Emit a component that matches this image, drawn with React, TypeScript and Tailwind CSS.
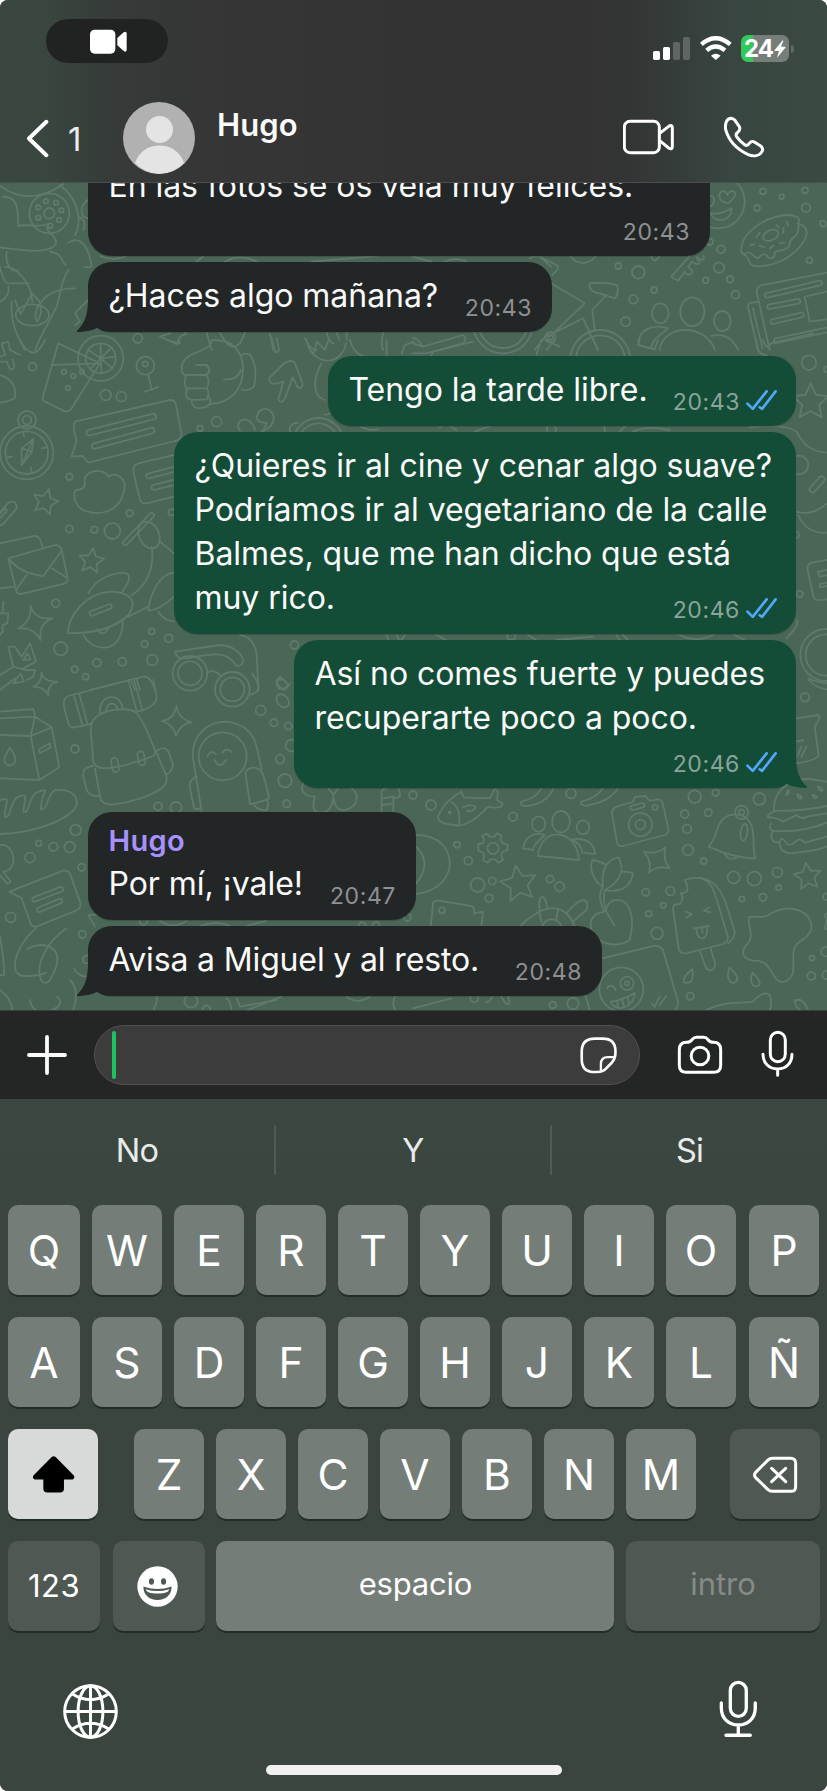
import React from "react";

/* ---------- Wallpaper ---------- */

type Bar = [number, number, number, number, number];
type Tile = {
  x: number;
  y: number;
  paths: string[];
  dots: [number, number, number][];
  ovals?: [number, number, number, number, number][];
  bars?: Bar[];
  stars?: [number, number, number, number][];
};

const tiles: Tile[] = [
  {
    x: 0,
    y: 0,
    paths: [
      "M0 558 Q90 622 190 552",
      "M10 590 C60 590 52 640 55 678 C80 670 110 685 145 672 C130 700 170 700 168 730 C150 765 60 750 0 742",
      "M180 555 C240 600 245 670 225 705 M235 650 Q262 660 250 690 M262 600 Q235 625 250 650 L264 655",
      "M20 755 C15 790 30 815 55 812 M150 755 C190 760 185 790 197 795 M205 728 C250 700 270 760 275 800 L255 802",
      "M0 800 Q10 850 25 850 L85 850 M15 800 C50 800 95 850 97 905 M205 810 C180 850 185 870 170 920 C140 980 120 1010 105 1050 M35 905 C30 980 60 1020 75 1050 M225 865 C160 865 130 890 115 920 M0 905 Q30 890 25 860",
      "M45 900 L62 942 L97 880 L118 905 Q130 940 112 965 Q100 950 115 915",
      "M300 768 Q340 785 380 768 M590 785 L610 768 M675 785 Q720 760 770 785 M935 785 L1130 768",
      "M480 1010 L510 1000 L520 985 M480 1010 L505 1020 L530 1033 L540 1010 L560 1000 L545 990",
      "M620 998 L635 1050 M660 998 Q690 1060 720 1030 L735 998 M810 1000 L820 1050",
      "M980 998 Q990 1030 1000 1030 M1010 998 L1018 1020 M1040 998 L1040 1020 M915 1015 Q930 1050 950 1050 M1150 998 Q1140 1030 1150 1050",
      "M264 900 L225 940 L240 965 L225 975",
    ],
    dots: [[148, 640, 60], [148, 640, 16], [138, 604, 7], [168, 608, 7], [184, 631, 7], [177, 660, 7], [151, 677, 7], [115, 653, 7], [115, 622, 7], [413, 1015, 14]],
    ovals: [[97, 945, 50, 32, 0]],
  },
  {
    x: 413,
    y: 0,
    paths: [
      "M920 592 C915 570 940 568 943 585 C955 565 975 575 963 590 C955 605 945 612 940 608 C930 606 922 602 920 592 M892 620 Q910 605 900 590 L892 588",
      "M893 640 Q925 645 955 625 C958 665 905 672 893 640z",
      "M985 740 C995 690 1060 650 1120 645 C1150 645 1165 655 1155 670 C1185 680 1190 700 1165 735 C1130 780 1070 805 1020 797 C1000 785 1010 770 995 765 C980 760 985 745 985 740z",
      "M995 765 C1010 745 1020 770 1028 772 C1045 780 1040 755 1060 765 C1065 780 1085 775 1085 765 C1080 745 1120 760 1130 735 C1125 710 1165 715 1155 670",
      "M1030 712 l10 -14 M1012 735 l12 -2 M1040 738 l14 3 M1070 745 l12 -8 M1100 730 l14 -2 M1110 700 l2 -16 M1090 675 l8 8 M1120 665 l6 12",
      "M830 768 L775 830 L795 842 L815 815 C820 828 838 826 838 812 L825 800 L838 785 Q855 800 860 785 L850 770 Q875 790 872 768 M715 770 Q720 785 730 780 L740 768",
      "M1242 818 L1050 855 Q1028 860 1032 880 L1070 1050 M1032 906 L1015 908 Q1003 910 1006 925 L1035 1050 M1020 925 L1048 1045",
      "M1242 875 L1175 890 L1190 965 L1242 958",
      "M740 1050 C750 970 880 970 905 1050 M675 1035 C675 990 720 970 765 985 L735 1010 Q720 1020 715 1045z M895 1008 Q950 995 975 1050",
      "M415 850 L515 910 L410 1010 M430 995 L510 955 L555 1050 M545 990 L538 930 L580 885 M530 850 Q525 875 560 880 L605 895 Q620 880 612 855 Q570 845 530 850z",
      "M350 775 Q370 765 380 770 L430 795 Q440 800 430 812 L418 825 M380 770 L415 800 M470 768 Q510 810 550 768 M95 785 Q130 770 160 785 M0 770 L55 785",
      "M0 1030 L30 1040 L150 1005 M30 1040 Q10 1010 0 1015 M0 1060 L40 1060 L150 1030 Q165 1015 150 1005",
      "M365 1050 L405 1000 M400 1050 L425 1020",
    ],
    dots: [[915, 605, 80], [1050, 574, 9], [1106, 590, 7], [1176, 571, 9], [1032, 624, 9], [1179, 623, 13], [1230, 671, 9], [1189, 781, 9], [924, 748, 12], [890, 725, 10], [918, 803, 16], [878, 841, 9], [951, 838, 10], [967, 884, 12], [616, 798, 9], [676, 817, 19], [723, 870, 9], [661, 898, 13], [638, 965, 14], [270, 970, 90], [270, 970, 74], [562, 1080, 90], [562, 1080, 74], [412, 1012, 8], [412, 1012, 16]],
    ovals: [[1073, 706, 24, 15, -25], [838, 935, 36, 43, 0], [742, 940, 25, 30, 0], [928, 963, 25, 30, 0]],
    bars: [[1062, 886, 1220, 849, 14], [1070, 920, 1155, 904, 14], [1080, 965, 1165, 945, 14], [1090, 1022, 1242, 990, 14]],
  },
  {
    x: 0,
    y: 340,
    paths: [
      "M175 10 L300 70 L215 205 Q205 220 190 212 L135 185 Q125 180 130 165z M155 75 L300 70",
      "M302 55 L302 12 M302 55 L335 22 M302 55 L346 50 M302 55 L338 85 M302 55 L305 98 M302 55 L270 88 M302 55 L265 30",
      "M445 105 L455 150 M432 156 L475 141",
      "M635 0 C635 40 545 30 545 85 Q545 105 558 105 Q548 140 562 145 Q550 175 575 180 Q575 210 610 203 Q640 195 628 172 M588 75 L620 75 Q635 90 620 105 L558 105 M562 145 L620 145 Q632 125 620 105 M575 180 L620 178 Q630 160 620 145 M640 0 C700 0 720 30 728 70 C735 150 690 190 630 192 M672 118 Q715 120 722 90 M722 45 Q745 38 750 45 Q775 80 762 140 Q745 155 725 148",
      "M850 72 Q875 55 885 70 L908 130 Q908 150 892 140 L878 112 L855 175 Q845 195 835 178 L850 125 L822 132 Q800 125 810 112z",
      "M815 -5 L825 35 Q835 40 837 30 L830 -5",
      "M65 325 L100 297 L96 335 L65 375z M100 297 L65 375 M65 325 L96 335 M69 275 l3 14 M125 325 l14 -3 M92 382 l3 14 M22 352 l14 -3",
      "M225 245 L510 180 Q525 180 528 195 L545 285 Q540 300 525 303 L265 368 L248 348 L215 350 L230 300 Q215 260 225 245z",
      "M522 345 L415 370 Q398 375 400 395 L420 480 Q425 492 440 490 L522 470",
      "M255 430 C245 390 310 380 325 410 C350 390 385 420 370 460 C355 520 290 525 265 515 C225 510 215 460 228 450 Q255 450 255 430z",
      "M25 655 L165 615 Q180 615 185 630 L203 715 Q203 730 190 732 L65 762 Q50 762 48 750z M25 655 Q60 700 130 708 L185 632 M48 750 L80 705 M203 715 L155 685 M0 610 L105 587 Q122 590 128 622 M0 745 L40 740",
      "M92 797 Q102 840 157 835 Q115 850 122 900 Q100 860 55 865 Q95 845 92 797z",
      "M125 997 Q130 1025 172 1025 Q140 1035 145 1065 Q130 1040 100 1040 Q125 1030 125 997z",
      "M205 880 C200 830 260 755 340 755 C400 760 410 790 385 825 C340 870 260 880 205 880z M265 760 C290 710 350 695 380 700 Q400 710 365 758 M250 885 C270 920 300 925 320 922 C350 920 370 880 368 845 M290 868 Q310 895 328 860 M395 765 C440 740 465 680 455 620 M385 830 L445 800",
      "M445 812 C450 760 480 700 522 698 M445 812 Q480 810 522 770 M480 605 L522 640 M475 815 Q490 840 522 845",
      "M0 105 Q50 120 45 170 Q45 180 0 188 M60 0 Q80 40 105 38 Q120 30 135 0",
      "M5 10 L25 5 L30 30 L60 45 M5 10 L15 45 L0 50 M0 65 L20 65 L30 88 Q45 90 42 75 L38 58",
      "M25 920 L45 920 L65 950 L90 910 L108 965 L70 985 M25 920 L40 980 L0 1005 M40 980 L75 990 L105 990 L100 1010 L80 1020 M0 1050 L45 1015 M0 820 L25 820 L22 850 L8 855 L8 875 L0 885 M10 785 L8 815 M70 960 L82 940 L92 958z M40 1030 L62 1000 L72 1025z",
      "M525 935 L660 915 C700 915 730 945 730 965 Q715 990 700 965 C670 930 620 945 560 955 Q530 960 525 935z M720 885 Q760 890 770 940 L775 1050 M620 1000 Q640 985 660 1005",
      "M270 1050 L430 1010 Q450 1005 465 1050 M395 1025 L405 1050 M410 1018 L420 1050",
      "M920 0 C930 70 1020 90 1038 10 M965 70 C940 110 935 170 975 180 M940 45 L950 5 L975 30 L985 0 M1050 0 Q1060 40 1090 48 M1160 0 L1160 45 M1205 40 L1215 15 L1242 5",
      "M770 232 Q775 205 800 207 C830 215 830 260 785 275 Q800 255 800 248 Q772 250 770 232z M765 270 C760 245 735 230 718 245 Q710 260 720 272 M870 275 Q865 250 895 248 M975 225 L1015 212 M1085 262 L1110 270 L1135 268",
      "M1160 885 L1170 915 M1190 885 L1200 905 L1215 885",
      "M840 1010 Q820 1030 850 1050 Q880 1040 840 1010z M500 0 L540 10 L535 0",
    ],
    dots: [[302, 55, 68], [302, 55, 45], [98, 80, 12], [436, 77, 27], [436, 72, 8], [192, 95, 7], [220, 108, 7], [246, 95, 7], [204, 144, 7], [317, 165, 16], [364, 170, 15], [650, 245, 15], [600, 265, 9], [208, 410, 10], [389, 520, 10], [208, 567, 11], [283, 569, 10], [337, 573, 24], [167, 790, 12], [455, 874, 9], [506, 895, 12], [434, 912, 10], [457, 960, 16], [367, 965, 12], [291, 968, 12], [224, 988, 10], [257, 1010, 9], [182, 926, 20], [883, 915, 12], [80, 338, 80], [80, 338, 64], [81, 240, 27], [81, 240, 13], [955, 310, 76], [955, 310, 60], [515, 517, 10], [570, 1000, 52], [570, 1000, 36], [697, 1048, 52], [697, 1048, 36]],
    ovals: [[447, 585, 30, 42, -25]],
    bars: [[268, 278, 460, 230, 17], [284, 318, 455, 272, 17], [446, 408, 522, 388, 15], [462, 442, 522, 427, 15], [0, 540, 35, 500, 30], [0, 528, 15, 512, 10], [276, 820, 328, 800, 14], [376, 608, 455, 526, 14]],
    stars: [[136, 486, 40, 15], [274, 663, 39, 8]],
  },
  {
    x: 413,
    y: 340,
    paths: [
      "M1149 515 Q1195 530 1242 490 M1155 525 C1175 570 1210 580 1242 578",
      "M1010 262 Q1120 250 1150 275 C1170 310 1190 335 1242 338",
      "M1242 660 L1195 668 Q1180 675 1184 690 L1202 772 Q1205 785 1242 778 M1242 690 L1215 695 L1218 710 L1242 706 M1242 728 L1220 732 L1222 742 L1242 738",
      "M55 45 L60 35 L180 5 M370 45 L385 0 M400 0 L440 20 M680 0 L675 15 L725 28 L735 0 M1030 0 Q1030 45 1060 45 M1050 0 Q1055 20 1065 20 L1075 10 L1200 -20",
      "M80 262 L100 250 L130 270 M185 275 L240 255 M620 275 L640 255 M660 275 Q700 255 770 270 M575 258 L575 275",
      "M70 885 L100 900 M345 885 L370 900 M430 900 L540 890 M610 885 L620 900 M630 885 L645 900 M800 885 Q850 910 900 885 M965 885 L995 900",
      "M1149 840 Q1165 850 1120 895",
    ],
    dots: [[1188, 68, 22], [1242, 88, 9], [1158, 375, 28], [1160, 762, 10], [1240, 945, 78], [1240, 945, 62], [295, 888, 12], [415, 268, 14], [1148, 585, 10]],
    bars: [[1226, 418, 1199, 448, 18]],
    stars: [[1193, 186, 56, 0]],
  },
  {
    x: 0,
    y: 680,
    paths: [
      "M390 0 L205 48 Q188 55 192 80 L205 130 Q210 145 225 142 L272 132 M222 48 L248 138 M238 42 L262 130 M385 0 L410 92 M402 0 L428 92 M412 95 Q470 80 470 50 L460 0",
      "M272 150 C270 105 320 90 360 88 C410 85 415 100 440 150 L465 210 Q470 225 455 230 C400 250 350 265 315 265 Q285 265 280 245z M285 265 L300 350 Q305 375 335 374 C390 368 450 350 485 325 Q505 310 498 285 L468 215 M278 258 Q245 262 250 290 L260 330 Q270 350 297 348 M470 212 Q495 195 505 215 L518 250 Q522 270 500 283 M300 100 C295 40 365 35 368 88 M318 92 Q322 70 335 70 Q350 72 352 88",
      "M530 78 Q535 118 575 126 Q540 132 528 168 Q522 135 486 123 Q522 118 530 78z",
      "M605 395 L580 240 C570 170 620 125 675 125 C730 128 760 160 770 200 L785 268 M622 228 Q635 208 648 222 M667 218 Q680 200 694 216 M643 240 Q660 270 678 240",
      "M737 285 Q735 265 760 263 Q780 262 790 285 L807 350 Q806 360 790 362 Q770 370 750 372z M762 375 Q775 392 800 390 Q808 375 802 362 M590 290 Q565 300 570 325 L582 385 Q590 390 600 385",
      "M0 95 L100 87 L105 110 L92 168 L0 165 M0 115 L105 110 L155 142 L92 168 L118 300 L0 295 M155 142 L178 262 L118 300 M30 203 C15 225 8 240 18 252 Q30 262 42 250 C52 240 42 220 30 203z M118 208 L150 190 L152 202 L120 220z",
      "M0 362 C10 355 25 355 20 368 Q15 390 14 410 Q22 415 28 400 Q35 370 50 352 Q75 340 76 352 Q72 375 70 395 Q78 400 84 385 Q95 350 105 340 Q140 325 135 335 Q125 355 122 388 Q132 392 140 372 Q150 340 165 330 C225 325 240 360 225 385 C190 430 80 460 0 462",
      "M28 635 L190 572 Q205 570 210 582 L242 670 Q242 685 232 690 L110 740 Q97 742 92 732 L65 655z",
      "M0 495 C30 490 50 530 35 560 Q25 575 10 575 L32 605 L22 612 L0 585",
      "M200 745 C140 785 110 850 120 890 C125 915 145 915 155 890 C185 840 175 800 130 795 Q100 795 82 808 M110 742 C70 775 40 830 45 865 Q50 890 80 888 Q120 888 140 878",
      "M0 930 Q30 950 38 990 M0 770 Q14 850 12 885 L0 885 M210 900 Q240 930 220 990 M90 960 Q95 1000 140 995 Q185 985 180 960 L172 950 M312 703 L265 705 L285 740 M222 865 Q230 885 258 890",
      "M470 950 Q475 960 460 990 M680 955 Q690 960 695 990 M710 955 L720 980 L830 960 M730 995 L845 950 M1185 950 Q1175 970 1185 990 M1040 950 Q1070 975 1110 950",
      "M915 300 C895 330 910 350 945 350 Q930 395 960 398 C990 400 1000 370 1000 350 Q1005 395 1035 390 C1075 380 1080 345 1055 325 M985 325 L1000 345 L1015 325",
      "M1145 395 L1145 340 Q1145 325 1160 325 M1195 325 Q1202 340 1200 350 L1180 355 L1180 395 M1147 355 L1180 350 M1147 375 L1180 370",
      "M480 722 Q520 750 560 722 M600 738 Q650 720 690 738 M740 738 L800 722 M1075 738 Q1085 715 1100 738 M1115 738 Q1130 710 1140 738",
      "M755 -20 Q780 10 775 30 Q760 45 745 45 M845 0 Q820 -10 835 25 Q860 30 870 10",
    ],
    dots: [[225, 207, 12], [474, 379, 12], [528, 383, 17], [782, 91, 15], [822, 128, 11], [865, 138, 11], [875, 197, 18], [840, 237, 13], [855, 302, 20], [860, 371, 11], [227, 450, 16], [116, 490, 9], [160, 500, 13], [209, 501, 16], [90, 533, 15], [245, 562, 11], [32, 712, 15], [247, 763, 11], [260, 838, 12], [668, 229, 72], [573, 963, 20], [620, 987, 11], [1222, 712, 11], [430, 724, 11]],
    ovals: [[848, 62, 16, 22, -40]],
    bars: [[343, 244, 347, 266, 20], [422, 224, 426, 246, 20], [104, 658, 182, 628, 14], [118, 689, 180, 663, 14]],
  },
  {
    x: 413,
    y: 680,
    paths: [
      "M75 410 C90 370 120 350 145 335 L152 352 L230 355 L245 328 Q258 325 252 360 L270 372 Q265 388 225 380 C190 420 150 440 130 436 C90 432 75 425 75 410z M115 365 Q145 385 138 435 M150 383 Q165 370 188 380 Q180 400 162 392",
      "M375 528 C380 440 490 440 498 540z M330 505 C335 470 365 455 395 465 L375 485 Q362 495 360 510z M475 478 Q540 470 547 522 L508 518 Q505 490 475 478z",
      "M597 400 Q597 385 610 380 L660 366 Q662 352 672 350 L698 348 Q705 360 712 362 L735 358 Q745 358 749 370 L766 445 Q768 460 755 465 L630 498 Q615 500 612 488z",
      "M887 500 C910 475 905 460 920 430 C940 395 990 395 1010 425 C1030 455 1015 500 1027 535 C975 535 930 520 887 500z M935 520 Q945 545 972 532",
      "M1083 392 C1080 340 1120 295 1190 297 L1242 305 M1083 392 Q1160 395 1242 378 M1083 395 C1060 405 1060 415 1075 412 Q1100 415 1110 425 Q1130 415 1150 405 Q1165 420 1180 410 L1242 400 M1075 430 Q1065 445 1078 452 Q1160 460 1242 428 M1078 452 C1070 480 1080 488 1100 487 Q1105 465 1120 490 Q1130 500 1145 487 Q1160 470 1175 488 L1242 470 M1100 487 Q1098 515 1130 520 Q1200 515 1242 500",
      "M1120 345 q2 -14 8 -14 q4 10 -8 14 M1153 343 q10 2 14 12 q-12 4 -14 -12 M1198 345 q10 -2 14 6 q-10 8 -14 -6 M1215 320 q10 0 14 12 q-12 2 -14 -12",
      "M693 515 Q730 525 757 502 Q748 540 770 565 Q730 555 708 578 Q718 545 693 515z",
      "M575 695 Q550 650 570 620 C535 600 530 560 538 540 Q565 545 580 555 Q595 535 617 532 Q628 555 625 575 Q650 575 660 580 C655 620 620 640 575 630 M570 620 Q565 580 580 555 M575 630 Q615 610 625 575 M575 630 Q568 660 580 695 Q600 730 605 737 M575 695 C535 700 520 730 545 765 C570 800 620 800 650 780 C665 720 655 680 630 663 Q590 650 578 690",
      "M815 600 C860 585 890 595 905 640 L945 770 Q945 785 930 792 L820 820 Q800 822 797 805 L780 685 Q780 672 800 672 Q815 655 803 640 Q830 640 822 615z M860 593 C910 600 930 640 945 690 L965 755 Q965 775 945 790 M862 815 L877 860 Q885 875 900 868 Q910 860 905 845 L893 805 M818 695 L837 703 L820 713 M890 682 L872 692 L892 697 M843 745 L887 738 M850 745 Q850 775 868 775 Q885 772 882 740 M866 742 L869 758",
      "M1008 712 C1030 705 1050 720 1075 700 C1110 680 1160 680 1185 710 C1205 740 1195 765 1160 785 C1130 805 1145 840 1140 880 C1125 910 1100 915 1085 890 C1065 860 1060 840 1020 842 C985 835 985 815 1000 795 C1030 770 1000 730 1008 712z",
      "M838 868 C815 885 808 900 815 908 Q845 915 838 868z M950 862 C940 885 945 905 960 910 Q990 900 950 862z M1018 878 C1010 900 1015 918 1030 920 Q1055 912 1018 878z",
      "M53 740 L60 670 Q62 660 75 662 L175 678 Q185 680 183 700 L210 695 L205 740",
      "M320 740 Q380 680 430 685 Q470 695 485 740 M385 745 Q395 715 420 718 Q440 722 445 740 M378 692 L385 725 M435 688 L430 720 M380 690 Q375 655 388 650 Q400 655 402 685 M460 700 Q490 665 510 660 Q530 665 520 690 L480 725",
      "M568 835 L725 797 Q742 797 750 810 L795 965 Q795 985 785 990 M518 948 L530 990 M582 925 Q595 905 608 930 M593 965 Q630 960 665 938 C665 985 605 1000 593 965z M612 962 L615 985 M628 958 L633 980 M645 952 L648 972 M715 970 L725 980 L740 950 M740 975 L760 948",
      "M880 990 C940 960 1000 970 1020 965 Q1050 930 1070 945 Q1080 970 1070 990 M1145 962 Q1170 950 1185 990 M1145 962 Q1148 980 1160 990",
      "M9 465 C80 465 115 510 110 560 C100 610 60 635 9 642 M9 500 Q60 550 9 610",
      "M325 365 Q370 355 385 325 M325 365 Q320 380 345 378 Q400 370 422 325 M505 365 Q550 355 570 325 M505 365 Q500 380 525 376 Q590 365 615 325",
      "M1149 115 L1215 105 Q1225 110 1205 140 L1217 225 Q1215 240 1149 250 M1150 185 L1172 180 M1155 225 L1165 200 M1165 230 L1180 200",
      "M1187 0 Q1210 25 1242 28 M1187 -5 Q1210 8 1242 10 M0 985 L115 955 M220 965 Q230 970 240 945 M265 950 Q280 980 290 970 L285 948",
      "M1242 700 L1235 705 L1242 720 L1235 745 L1242 748",
      "M196 492 L210 489 L213 478 L207 468 L222 460 L230 470 L244 470 L252 460 L266 466 L262 480 L270 490 L284 494 L284 510 L270 514 L264 526 L270 540 L256 548 L246 538 L232 538 L224 548 L210 540 L214 528 L210 518 L196 512z",
    ],
    dots: [[54, 375, 15], [300, 410, 13], [474, 340, 15], [132, 494, 9], [166, 542, 12], [194, 615, 21], [238, 603, 11], [228, 655, 12], [411, 597, 11], [440, 620, 14], [698, 637, 11], [772, 633, 13], [751, 676, 8], [707, 701, 9], [732, 760, 18], [845, 350, 19], [908, 338, 10], [1039, 357, 18], [815, 402, 12], [886, 398, 11], [822, 447, 13], [825, 510, 16], [872, 543, 9], [962, 592, 18], [1024, 596, 21], [1093, 577, 15], [1097, 623, 8], [1050, 652, 11], [987, 657, 8], [1197, 834, 8], [1195, 888, 12], [832, 949, 11], [480, 971, 17], [419, 975, 10], [1176, 52, 13], [0, 345, 12], [240, 505, 17], [682, 434, 35], [682, 434, 15], [726, 382, 8], [986, 397, 20], [986, 397, 8], [87, 691, 9], [625, 928, 66], [642, 910, 20], [642, 910, 6], [110, 397, 3], [1240, 650, 10], [1238, 815, 14], [1240, 885, 12], [184, 955, 12]],
    ovals: [[444, 425, 27, 32, 0], [377, 432, 20, 23, 0], [510, 442, 19, 21, 0], [993, 457, 10, 26, 8]],
    bars: [[658, 384, 688, 376, 13]],
    stars: [[317, 612, 56, -10], [1184, 590, 42, -8]],
  },
];

function starPath(cx: number, cy: number, r: number, deg: number) {
  let d = "";
  for (let i = 0; i < 10; i++) {
    const a = ((i * 36 - 90 + deg) * Math.PI) / 180;
    const q = i % 2 ? r * 0.48 : r;
    d += `${i ? "L" : "M"}${(cx + q * Math.cos(a)).toFixed(1)} ${(cy + q * Math.sin(a)).toFixed(1)}`;
  }
  return d + "z";
}

function Capsule({ bar }: { bar: Bar }) {
  const [x1, y1, x2, y2, w] = bar;
  const len = Math.hypot(x2 - x1, y2 - y1);
  const ang = (Math.atan2(y2 - y1, x2 - x1) * 180) / Math.PI;
  return (
    <rect
      x={-w / 2}
      y={-w / 2}
      width={len + w}
      height={w}
      rx={w / 2}
      transform={`translate(${x1} ${y1}) rotate(${ang})`}
    />
  );
}

function Wallpaper() {
  return (
    <svg
      viewBox="0 183 827 827"
      className="absolute inset-0 h-full w-full"
      fill="none"
      stroke="#5f7a6d"
      strokeWidth="5.4"
      strokeLinecap="round"
      strokeLinejoin="round"
      aria-hidden="true"
    >
      {tiles.map((t, i) => (
        <g key={i} transform={`translate(${t.x} ${t.y}) scale(0.33333)`}>
          {t.paths.map((d, k) => <path key={k} d={d} />)}
          {t.dots.map(([x, y, r], k) => <circle key={k} cx={x} cy={y} r={r} />)}
          {t.ovals?.map(([x, y, rx, ry, a], k) => (
            <ellipse key={k} cx={x} cy={y} rx={rx} ry={ry} transform={`rotate(${a} ${x} ${y})`} />
          ))}
          {t.bars?.map((b, k) => <Capsule key={k} bar={b} />)}
          {t.stars?.map(([x, y, r, a], k) => <path key={k} d={starPath(x, y, r, a)} />)}
        </g>
      ))}
    </svg>
  );
}

/* ---------- Header ---------- */

function StatusBar() {
  return (
    <div className="flex h-[83px] items-start justify-between pt-[19px] pr-[33px] pl-[46px]">
      <div className="flex h-11 w-[122px] items-center justify-center rounded-full bg-[#212322]">
        <svg viewBox="270 88 111 75" className="mt-px ml-[2px] h-[25px] w-[37px]" fill="#fff">
          <rect x="270" y="90" width="76" height="72" rx="14" />
          <path d="M352 115 L371 98 Q380 92 380 103 V149 Q380 160 371 154 L352 137z" />
        </svg>
      </div>
      <div className="flex items-start pt-4">
        <svg viewBox="0 0 111 69" className="mt-[2px] h-[23px] w-[37px]" fill="#fff">
          <rect x="0" y="42" width="21" height="27" rx="5" />
          <rect x="30" y="30" width="21" height="39" rx="5" />
          <rect x="60" y="15" width="21" height="54" rx="5" fill="#5f6562" />
          <rect x="90" y="0" width="21" height="69" rx="5" fill="#5f6562" />
        </svg>
        <svg viewBox="0 0 95 72" className="mt-px ml-[10px] h-6 w-[31.6px]" fill="none" stroke="#fff" strokeWidth="13">
          <path d="M4 25 Q47 -12 91 25" />
          <path d="M20 43 Q47 20 75 43" />
          <path d="M33 59 Q47 48 62 59 L47.500 72z" fill="#fff" stroke="none" />
        </svg>
        <div className="ml-[9px] flex items-center gap-[2px]">
          <div className="flex h-[27px] w-12 items-center rounded-[7px] bg-[linear-gradient(90deg,#35c759_0_12px,#767e79_12px)] pl-[3px]">
            <span className="text-[24px] leading-[27px] font-bold tracking-[-1px] text-white">24</span>
            <svg viewBox="0 0 36 54" className="ml-px h-[18px] w-3 shrink-0" fill="#fff">
              <path d="M26 1 L2 30 Q0 33 4 33 H15 L9 53 L34 23 Q36 20 32 20 H21 L28 3z" />
            </svg>
          </div>
          <div className="h-2 w-[3px] rounded-r-full bg-[#5f6a64]" />
        </div>
      </div>
    </div>
  );
}

function ContactRow() {
  return (
    <div className="flex flex-1 items-start pt-[19px] pl-[26px]">
      <svg viewBox="79 358 70 118" className="mt-[17px] h-[39px] w-[23px]" fill="none" stroke="#fff" strokeWidth="12" strokeLinecap="round" strokeLinejoin="round">
        <path d="M141 366 L88 417 L141 468" />
      </svg>
      <span className="mt-[17px] ml-[19px] w-[15px] text-[33px] leading-10 text-[#ececec]">1</span>
      <svg viewBox="0 0 72 72" className="ml-10 h-[72px] w-[72px] rounded-full bg-[#b1b1b1]">
        <circle cx="36.500" cy="27.500" r="13.500" fill="#e4e4e4" />
        <path d="M12 61 C16 49 26 43.500 36.500 43.500 C47 43.500 57 49 61 61 C55 67 47 72 36.500 72 C26 72 18 67 12 61z" fill="#e4e4e4" />
      </svg>
      <h1 className="mt-[3px] ml-[22px] text-[31px] leading-10 font-semibold tracking-[0.05px] text-[#fafafa]">Hugo</h1>
      <div className="ml-auto flex items-start pr-[62px]">
        <svg viewBox="630 357 156 108" className="mt-[17px] h-9 w-[52px]" fill="none" stroke="#fff" strokeWidth="9" strokeLinejoin="round">
          <rect x="634" y="364" width="105" height="94" rx="17" />
          <path d="M740 400 L767 379 Q778 372 778 384 V439 Q778 451 767 444 L740 422" />
        </svg>
        <svg viewBox="930 347 126 126" className="mt-[14px] ml-[48px] h-[42px] w-[42px]" fill="none" stroke="#fff" strokeWidth="9" strokeLinejoin="round">
          <path d="M945 357 Q957 350 966 360 L979 379 Q983 387 976 394 Q966 401 971 409 Q981 424 996 434 Q1004 438 1009 429 Q1016 421 1024 425 L1043 437 Q1053 445 1046 455 C1037 468 1020 469 1004 462 C972 447 947 420 938 388 Q935 366 945 357z" />
        </svg>
      </div>
    </div>
  );
}

/* ---------- Messages ---------- */

function Ticks() {
  return (
    <svg viewBox="998 152 93 62" className="mb-[3px] ml-[7px] h-[20.600px] w-[31px]" fill="none" stroke="#53a7fb" strokeWidth="8" strokeLinecap="round" strokeLinejoin="round">
      <path d="M1002 193 L1018 209 L1060 156 M1039 204 L1046 209 L1087 156" />
    </svg>
  );
}

function Tail({ className }: { className: string }) {
  return (
    <svg viewBox="228 888 108 108" className={`absolute bottom-0 h-9 w-9 ${className}`} fill="currentColor">
      <path d="M264 888 C266 945 252 973 231 992 Q228 996 238 996 Q270 994 293 983 Q305 996 336 996 L336 888z" />
    </svg>
  );
}

type MessageProps = {
  lines: string[];
  time: string;
  box: string;
  mine?: boolean;
  tail?: boolean;
  author?: string;
  tracking?: string;
};

function Message({ lines, time, box, mine, tail, author, tracking = "tracking-[-0.05px]" }: MessageProps) {
  const tone = mine ? "self-end bg-[#144d37]" : "self-start bg-[#232626]";
  return (
    <div className={`relative grid shrink-0 rounded-[24px] shadow-[0_1px_1px_rgba(0,0,0,0.18)] ${tone} ${box}`}>
      {tail && <Tail className={mine ? "right-[-12px] -scale-x-100 text-[#144d37]" : "left-[-12px] text-[#232626]"} />}
      <div className={`relative col-start-1 row-start-1 pt-3 pl-[20.5px] text-[32px] leading-[44px] whitespace-nowrap text-[#fafafa] ${tracking}`}>
        {author && <p className="mt-[-3px] mb-px text-[29px] leading-10 font-semibold tracking-[0.3px] text-[#a791ff]">{author}</p>}
        {lines.map((l) => <p key={l}>{l}</p>)}
      </div>
      <div className={`relative col-start-1 row-start-1 flex items-end self-end justify-self-end pb-3 ${mine ? "pr-[19px]" : "pr-5"}`}>
        <time className={`text-[23px] leading-6 tracking-[0.6px] ${mine ? "-mr-px text-[#8aa499]" : "text-[#8f9091]"}`}>{time}</time>
        {mine && <Ticks />}
      </div>
    </div>
  );
}

function Chat() {
  return (
    <main className="relative h-[827px] overflow-hidden bg-[#4a6657]">
      <Wallpaper />
      <div className="relative mt-[-31px] flex h-full flex-col pr-[31px] pl-[88px]">
        <Message lines={["En las fotos se os veía muy felices."]} time="20:43" box="h-[104px] w-[622px]" />
        <Message lines={["¿Haces algo mañana?"]} time="20:43" box="mt-[6px] h-[70px] w-[464px]" tail />
        <Message lines={["Tengo la tarde libre."]} time="20:43" box="mt-6 h-[70px] w-[468px]" mine />
        <Message
          lines={[
            "¿Quieres ir al cine y cenar algo suave?",
            "Podríamos ir al vegetariano de la calle",
            "Balmes, que me han dicho que está",
            "muy rico.",
          ]}
          time="20:46"
          box="mt-[6px] h-[202px] w-[622px]"
          mine
        />
        <Message
          lines={["Así no comes fuerte y puedes", "recuperarte poco a poco."]}
          time="20:46"
          box="mt-[6px] h-[148px] w-[502px]"
          mine
          tail
        />
        <Message author="Hugo" lines={["Por mí, ¡vale!"]} time="20:47" box="mt-6 h-[108px] w-[328px]" />
        <Message
          lines={["Avisa a Miguel y al resto."]}
          time="20:48"
          box="mt-[6px] h-[70px] w-[514px]"
          tracking="tracking-[-0.15px]"
          tail
        />
      </div>
    </main>
  );
}

/* ---------- Composer ---------- */

function Composer() {
  return (
    <div className="flex h-[89px] items-center border-t border-[#3c3f3d] bg-[#242625] pr-[31px] pl-[27px]">
      <svg viewBox="0 0 40 40" className="h-10 w-10" stroke="#fafafa" strokeWidth="3.8" strokeLinecap="round">
        <path d="M20 2 V38 M2 20 H38" />
      </svg>
      <div className="ml-[27px] flex h-[60px] w-[546px] items-center justify-between rounded-full border border-[#505150] bg-[#3b3c3b] pr-[22px] pl-[17px]">
        <div className="h-12 w-1 rounded-full bg-[#20c063]" />
        <svg viewBox="500 110 113 112" className="h-[37px] w-[37.500px]" fill="none" stroke="#fafafa" strokeWidth="8" strokeLinejoin="round">
          <path d="M544 115 H568 Q607 115 607 153 V160 Q607 175 596 188 L580 204 Q569 216 552 216 H544 Q505 216 505 177 V154 Q505 115 544 115z" />
          <path d="M563 212 V192 Q563 171 584 171 H605" strokeWidth="7" />
        </svg>
      </div>
      <svg viewBox="792 105 138 120" className="ml-[37px] h-10 w-[46px]" fill="none" stroke="#fff" strokeWidth="9" strokeLinejoin="round">
        <path d="M821 127 Q832 127 838 118 Q843 112 851 112 H872 Q880 112 884 118 Q890 127 901 127 Q923 127 923 149 V196 Q923 217 902 217 H820 Q799 217 799 196 V149 Q799 127 821 127z" />
        <circle cx="861" cy="168" r="26.500" />
      </svg>
      <svg viewBox="1045 90 100 142" className="mt-[-2px] ml-[38px] h-[47.300px] w-[33.300px]" fill="none" stroke="#fff" strokeWidth="9" strokeLinecap="round">
        <rect x="1073" y="97" width="45" height="88" rx="22.500" />
        <path d="M1051 163 C1051 190 1070 207 1095 207 C1120 207 1138 190 1138 163 M1095 207 V226" />
      </svg>
    </div>
  );
}

/* ---------- Keyboard ---------- */

function Key({ children, size = "w-[70px]", tone = "bg-[#747d77] text-white" }: { children: React.ReactNode; size?: string; tone?: string }) {
  return (
    <button className={`flex h-[90px] shrink-0 items-center justify-center rounded-[10px] shadow-[0_2px_0_#232d27] ${tone} ${size}`}>
      {children}
    </button>
  );
}

function Letters({ row }: { row: string }) {
  return (
    <>
      {row.split("").map((c, i) => (
        <Key key={c} size={row.length === 10 && i === 0 ? "w-[72px]" : row.length === 10 && i === 9 ? "ml-px w-[70px]" : "w-[70px]"}>
          <span className="pt-[2px] text-[42.500px] leading-none">{c}</span>
        </Key>
      ))}
    </>
  );
}

function Suggestions() {
  return (
    <div className="grid h-[102px] grid-cols-[274px_2px_274px_2px_275px] items-center text-center text-[32.500px] leading-10 tracking-[-0.8px] text-[#e9ebea]">
      <span className="pt-[2px]">No</span>
      <i className="h-[50px] bg-[#505b55]" />
      <span className="pt-[2px]">Y</span>
      <i className="h-[50px] bg-[#505b55]" />
      <span className="pt-[2px]">Si</span>
    </div>
  );
}

function Keyboard() {
  const dark = "bg-[#505853] text-white";
  return (
    <div className="flex flex-1 flex-col bg-[linear-gradient(180deg,#3b4841_0%,#39453e_20%,#39453e_100%)]">
      <Suggestions />
      <div className="flex flex-col gap-[22px] pt-1 pl-2">
        <div className="flex gap-3"><Letters row="QWERTYUIOP" /></div>
        <div className="flex gap-3"><Letters row="ASDFGHJKLÑ" /></div>
        <div className="flex">
          <Key size="w-[90px]" tone="bg-[#d8dad9] text-black">
            <svg viewBox="97 166 130 116" className="ml-[2px] h-[38.600px] w-[43.300px]" fill="currentColor">
              <path d="M156 172 Q162 167 168 172 L222 227 Q228 235 219 240 H193 V267 Q193 279 181 279 H143 Q131 279 131 267 V240 H105 Q96 235 102 227z" />
            </svg>
          </Key>
          <div className="ml-9 flex gap-3"><Letters row="ZXCVBNM" /></div>
          <Key size="ml-[34px] w-[90px]" tone={dark}>
            <svg viewBox="1017 168 138 114" className="mt-[2px] h-[38px] w-[46px]" fill="none" stroke="currentColor" strokeWidth="9" strokeLinecap="round" strokeLinejoin="round">
              <path d="M1079 175 H1133 Q1148 175 1148 190 V260 Q1148 274 1133 274 H1079 Q1070 274 1064 268 L1028 233 Q1021 225 1028 217 L1064 181 Q1070 175 1079 175z M1076 205 L1118 245 M1118 205 L1076 245" />
            </svg>
          </Key>
        </div>
        <div className="flex">
          <Key size="w-[92px]" tone={dark}><span className="text-[31px] tracking-[0.5px]">123</span></Key>
          <Key size="ml-[13px] w-[92px]" tone={dark}>
            <svg viewBox="0 0 122 122" className="mr-[3px] h-[41px] w-[41px]">
              <circle cx="61" cy="61" r="60" fill="#fff" />
              <ellipse cx="43" cy="46" rx="7.500" ry="9.500" fill="#505853" />
              <ellipse cx="79" cy="46" rx="7.500" ry="9.500" fill="#505853" />
              <path d="M19 61 Q61 76 103 61 C103 86 86 101 61 101 C36 101 19 86 19 61z" fill="#505853" />
              <path d="M26 69 Q61 80 96 69 C94 78 82 82 61 82 C40 82 28 78 26 69z" fill="#fff" />
            </svg>
          </Key>
          <Key size="ml-[11px] w-[398px]"><span className="pb-1 pl-px text-[31px] tracking-[-0.2px]">espacio</span></Key>
          <Key size="ml-3 w-[194px]" tone="bg-[#505853] text-[#858b87]"><span className="pb-1 text-[31px]">intro</span></Key>
        </div>
      </div>
      <div className="flex items-start justify-between pt-[49px] pr-[69px] pl-[63px]">
        <svg viewBox="0 0 164 164" className="mt-1 h-[55px] w-[55px]" fill="none" stroke="#fff" strokeWidth="9">
          <circle cx="82" cy="82" r="77" />
          <ellipse cx="82" cy="82" rx="37" ry="77" />
          <path d="M82 5 V159 M5 82 H159 M28 30 Q82 64 136 30 M28 134 Q82 100 136 134" />
        </svg>
        <svg viewBox="916 840 116 174" className="h-[58px] w-[38.600px]" fill="none" stroke="#fff" strokeWidth="10" strokeLinecap="round">
          <rect x="950" y="847" width="48" height="102" rx="24" />
          <path d="M923 909 V924 C923 955 945 975 974 975 C1003 975 1025 955 1025 924 V909 M974 976 V1005 M937 1006 H1010" />
        </svg>
      </div>
      <div className="mt-auto mr-[265px] mb-4 ml-[266px] h-[10px] rounded-full bg-[#f0f0f0]" />
    </div>
  );
}

export default function App() {
  return (
    <div className="h-[1791px] w-[827px] overflow-hidden bg-white font-['Inter',sans-serif]">
      <div className="flex h-full flex-col overflow-hidden rounded-[8px] bg-[#39453e]">
        <header className="relative z-10 flex h-[183px] shrink-0 flex-col border-b border-[#4b4e4c] bg-[linear-gradient(90deg,#3a4740_0%,#39453f_6%,#363a38_14%,#353635_25%,#323332_48%,#313231_66%,#333534_76%,#384540_88%,#3b4a42_100%)]">
          <StatusBar />
          <ContactRow />
        </header>
        <Chat />
        <Composer />
        <Keyboard />
      </div>
    </div>
  );
}
